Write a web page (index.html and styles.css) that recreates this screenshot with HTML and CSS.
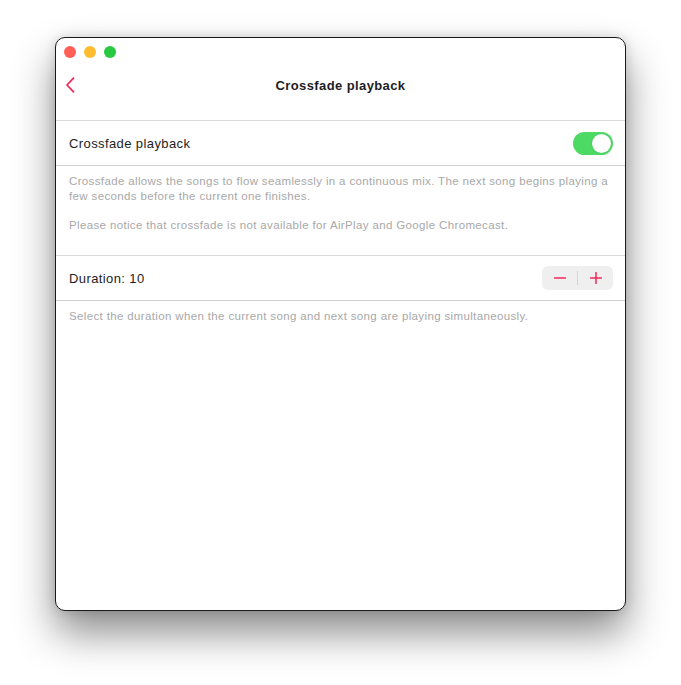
FILE: index.html
```html
<!DOCTYPE html>
<html lang="en">
<head>
    <meta charset="UTF-8">
    <meta name="viewport" content="width=device-width, initial-scale=1.0">
    <title>Crossfade playback</title>
    <link rel="stylesheet" href="styles.css">
</head>
<body>
    <div class="window">
        <div class="titlebar">
            <span class="light red"></span>
            <span class="light yellow"></span>
            <span class="light green"></span>
        </div>

        <nav class="navbar">
            <a class="back" href="#">
                <svg width="10" height="16" viewBox="0 0 10 16">
                    <path d="M8.5 1.2 L2 8 L8.5 14.8" fill="none" stroke="#f2295a" stroke-width="1.8" stroke-linecap="round" stroke-linejoin="round"/>
                </svg>
            </a>
            <h1 class="nav-title">Crossfade playback</h1>
        </nav>

        <section class="group">
            <div class="row">
                <span class="row-label">Crossfade playback</span>
                <span class="toggle on"><span class="knob"></span></span>
            </div>
        </section>
        <div class="footer">
            <p>Crossfade allows the songs to flow seamlessly in a continuous mix. The next song begins playing a few seconds before the current one finishes.</p>
            <p>Please notice that crossfade is not available for AirPlay and Google Chromecast.</p>
        </div>

        <section class="group">
            <div class="row">
                <span class="row-label">Duration: 10</span>
                <div class="stepper">
                    <button class="step">
                        <svg width="12" height="12" viewBox="0 0 12 12"><path d="M0.5 6 H11.5" stroke="#f2295a" stroke-width="1.5" stroke-linecap="round"/></svg>
                    </button>
                    <span class="step-divider"></span>
                    <button class="step">
                        <svg width="12" height="12" viewBox="0 0 12 12"><path d="M0.5 6 H11.5 M6 0.5 V11.5" stroke="#f2295a" stroke-width="1.5" stroke-linecap="round"/></svg>
                    </button>
                </div>
            </div>
        </section>
        <div class="footer">
            <p>Select the duration when the current song and next song are playing simultaneously.</p>
        </div>
    </div>
</body>
</html>
```

FILE: styles.css
```css
body {
    margin: 0;
    padding: 37px 0 74px 55px;
    background: #ffffff;
    font-family: "Liberation Sans", Arial, sans-serif;
    color: #1d1d1f;
}
.window {
    box-sizing: border-box;
    width: 571px;
    height: 574px;
    background: #ffffff;
    border: 1px solid #1a1a1a;
    border-radius: 10px;
    box-shadow: 0 22px 40px rgba(0, 0, 0, 0.45), 0 0 12px rgba(0, 0, 0, 0.15);
    overflow: hidden;
}
.titlebar {
    display: flex;
    gap: 8px;
    padding: 8px 0 0 8px;
    height: 12px;
}
.light {
    width: 12px;
    height: 12px;
    border-radius: 50%;
}
.red { background: #fe5f57; }
.yellow { background: #febc2e; }
.green { background: #28c840; }
.navbar {
    display: flex;
    align-items: center;
    justify-content: center;
    height: 54px;
    margin-bottom: 8px;
    position: relative;
}
.back {
    position: absolute;
    left: 9px;
    top: 19px;
    display: flex;
}
.nav-title {
    margin: 0;
    font-size: 13px;
    font-weight: bold;
    letter-spacing: 0.4px;
    color: #1d1d1f;
}
.group {
    border-top: 1px solid #dadada;
    border-bottom: 1px solid #d2d2d2;
}
.row {
    display: flex;
    align-items: center;
    justify-content: space-between;
    height: 44px;
    padding: 0 12px 0 13px;
}
.row-label {
    font-size: 13px;
    letter-spacing: 0.4px;
    color: #1d1d1f;
}
.toggle {
    display: flex;
    align-items: center;
    box-sizing: border-box;
    width: 40px;
    height: 23px;
    padding: 2px;
    border-radius: 12px;
    background: #4cd964;
}
.toggle.on {
    justify-content: flex-end;
}
.knob {
    width: 19px;
    height: 19px;
    border-radius: 50%;
    background: #ffffff;
    box-shadow: 0 0 1px rgba(0, 0, 0, 0.25);
}
.stepper {
    display: flex;
    align-items: center;
    width: 71px;
    height: 24px;
    border-radius: 6px;
    background: #efeff0;
}
.step {
    flex: 1;
    height: 100%;
    display: flex;
    align-items: center;
    justify-content: center;
    border: none;
    background: none;
    padding: 0;
}
.step-divider {
    width: 1px;
    height: 14px;
    background: #d6d6d6;
}
.footer {
    padding: 8px 12px 22px 13px;
    font-size: 11.5px;
    letter-spacing: 0.36px;
    line-height: 15px;
    color: #a8a8a8;
}
.footer p {
    margin: 0 0 14px 0;
}
.footer p:last-child {
    margin-bottom: 0;
}
```
